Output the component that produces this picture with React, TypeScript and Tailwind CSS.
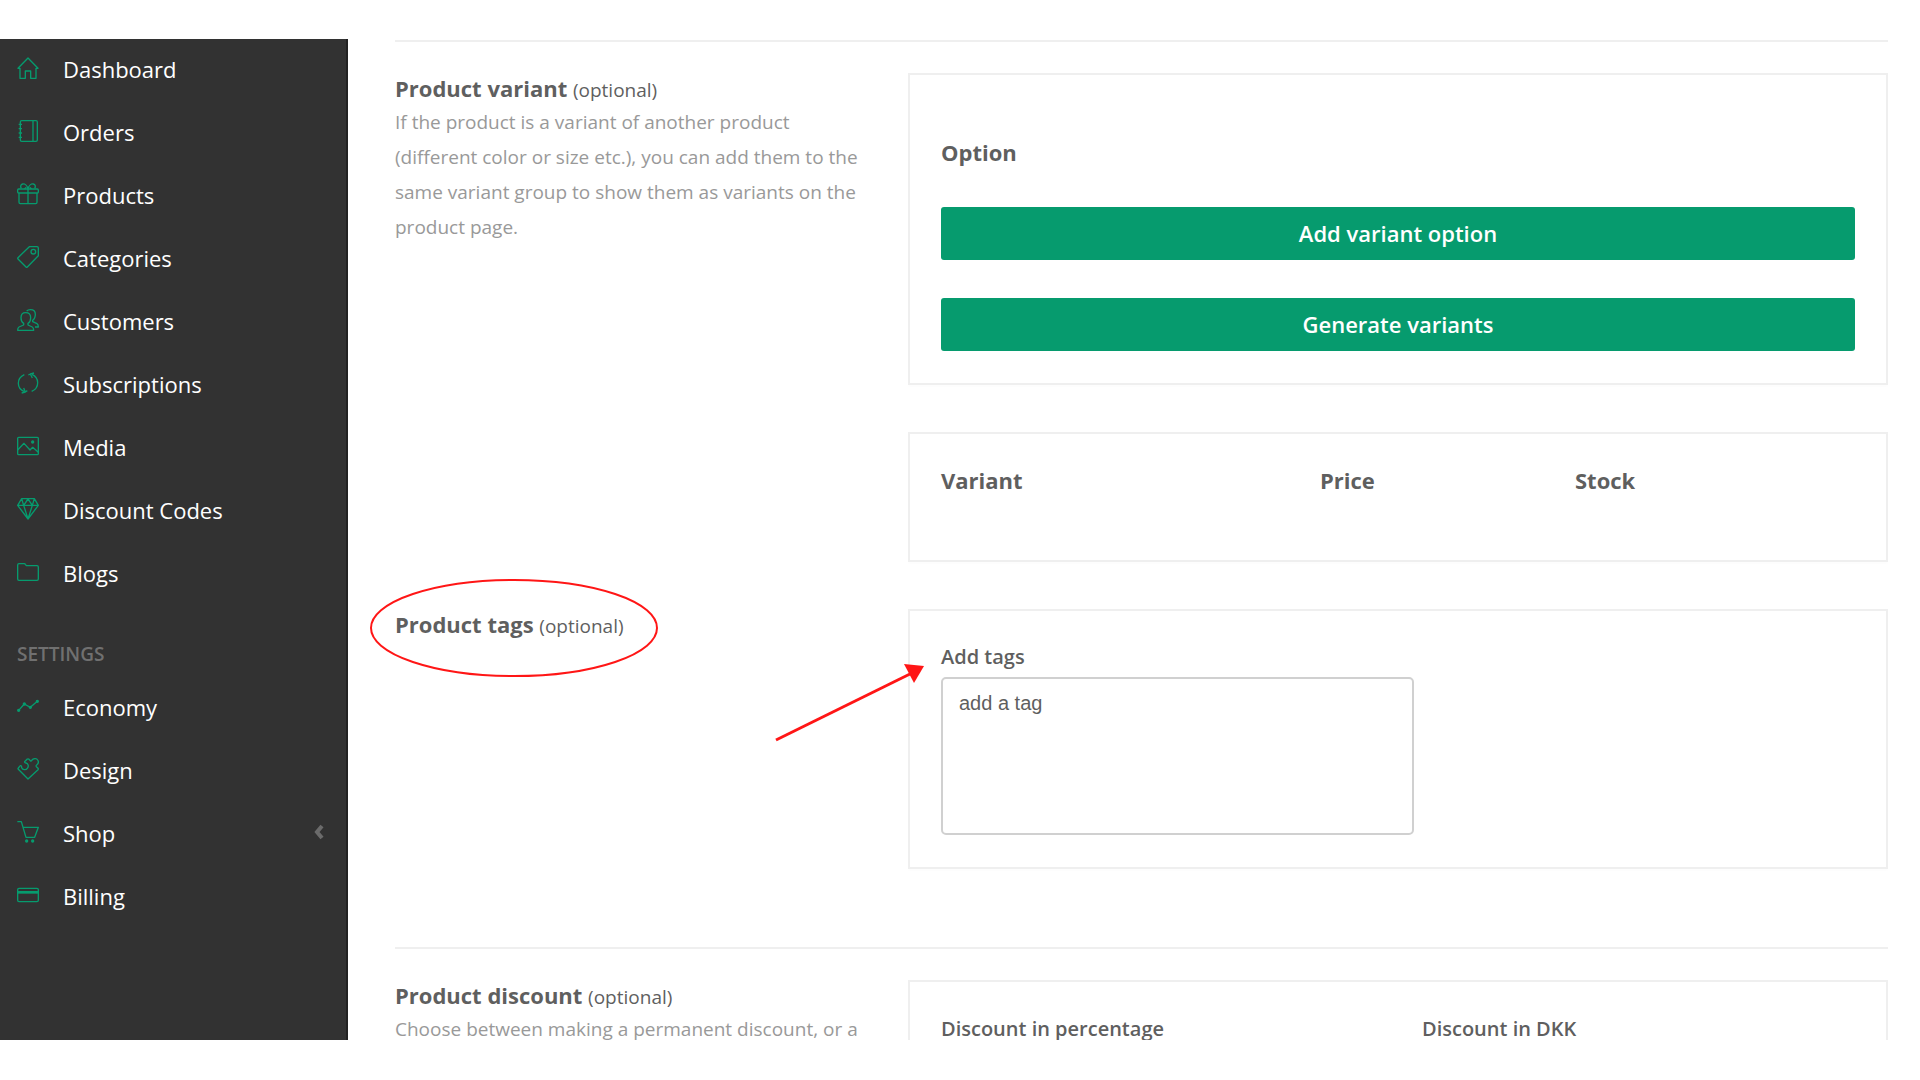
import type { ReactNode } from 'react';

type NavItem = {
    label: string;
    icon: ReactNode;
    expandable?: boolean;
};

const mainNav: NavItem[] = [
    {
        label: 'Dashboard',
        icon: <path d="M3 34 L33 3 L63 34 H57 V64 H41 V42 H25 V64 H9 V34 Z" />,
    },
    {
        label: 'Orders',
        icon: (
            <>
                <rect x="10" y="2" width="51" height="62" rx="4" />
                <path d="M48 2 V64 M5 13 H15 M5 26 H15 M5 39 H15 M5 52 H15" />
            </>
        ),
    },
    {
        label: 'Products',
        icon: (
            <>
                <rect x="2" y="18" width="62" height="12" rx="3" />
                <path d="M6 30 V58 Q6 62 10 62 H56 Q60 62 60 58 V30 M33 18 V62" />
                <path d="M33 18 C31 8 24 2 17 3 C11 4 9 11 13 16 M33 18 C35 8 42 2 49 3 C55 4 57 11 53 16 M23 18 C24 15 26 14 28 13 M43 18 C42 15 40 14 38 13" />
            </>
        ),
    },
    {
        label: 'Categories',
        icon: (
            <>
                <path d="M37 2 H60 Q64 2 64 6 V29 L31 63 Q29 65 27 63 L3 39 Q1 37 3 35 Z" />
                <circle cx="49" cy="17" r="7" />
            </>
        ),
    },
    {
        label: 'Customers',
        icon: (
            <>
                <path d="M26 11 C17 11 12 17 12 26 C12 34 15 40 20 43 V48 L6 54 Q2 56 2 64 H50 Q50 56 46 54 L33 48 V43 C38 40 41 34 41 26 C41 17 35 11 26 11 Z" />
                <path d="M29 6 C32 3 36 2 40 2 C49 2 55 7 55 16 C55 25 52 31 47 34 V38 L60 44 Q64 46 64 54 H54" />
            </>
        ),
    },
    {
        label: 'Subscriptions',
        icon: (
            <>
                <path d="M22 8 C9 14 4 24 4 34 C4 45 10 54 22 59 M44 58 C56 53 62 43 62 32 C62 22 56 12 45 7" />
                <path d="M20 48 L25 60 L14 63 M46 18 L40 6 L51 3 M25 60 L31 56 M40 6 L34 9" />
            </>
        ),
    },
    {
        label: 'Media',
        icon: (
            <>
                <rect x="2" y="7" width="62" height="52" rx="3" />
                <path d="M2 45 L21 25 L39 45 L47 37 L64 52" />
                <circle cx="47" cy="21" r="3" fill="currentColor" />
            </>
        ),
    },
    {
        label: 'Discount Codes',
        icon: (
            <path d="M14 2 H52 L64 22 L33 63 L2 22 Z M2 22 H64 M14 2 L20 22 L33 63 L46 22 L52 2 M20 22 L33 3 L46 22" />
        ),
    },
    {
        label: 'Blogs',
        icon: (
            <path d="M2 12 Q2 8 6 8 H22 Q24 8 25 10 L28 14 H60 Q64 14 64 18 V54 Q64 58 60 58 H6 Q2 58 2 54 Z" />
        ),
    },
];

const settingsNav: NavItem[] = [
    {
        label: 'Economy',
        icon: (
            <>
                <path d="M5 46 L22 27 L40 37 L61 19" />
                <g fill="currentColor">
                    <circle cx="5" cy="46" r="3" />
                    <circle cx="22" cy="27" r="3" />
                    <circle cx="40" cy="37" r="3" />
                    <circle cx="61" cy="19" r="3" />
                </g>
            </>
        ),
    },
    {
        label: 'Design',
        icon: (
            <path d="M33 63 L4 34 Q2 32 4 30 L10 23 C13 22 14 25 14 29 C17 36 27 37 31 31 C36 25 34 17 27 15 C22 14 22 12 24 10 L31 3 Q33 2 35 3 L41 9 C44 10 44 6 47 4 C52 1 59 1 62 6 C66 12 63 18 59 21 C56 23 57 25 59 27 L63 31 Q65 33 63 35 Z" />
        ),
    },
    {
        label: 'Shop',
        icon: (
            <>
                <path d="M1 2 H13 L27 49 H53 L64 19 H18" />
                <g fill="currentColor">
                    <circle cx="29" cy="60" r="3" />
                    <circle cx="47" cy="60" r="3" />
                </g>
            </>
        ),
        expandable: true,
    },
    {
        label: 'Billing',
        icon: (
            <>
                <rect x="2" y="13" width="62" height="40" rx="4" />
                <path d="M2 25 H64" strokeWidth="8" />
            </>
        ),
    },
];

function NavList({ items }: { items: NavItem[] }) {
    return (
        <ul className="flex flex-col gap-[27px]">
            {items.map((item) => (
                <li key={item.label}>
                    <a href="#" className="flex items-center pl-[17px] pr-[22px] text-[22px] text-white">
                        <svg
                            viewBox="0 0 66 66"
                            className="mr-6 h-[22px] w-[22px] shrink-0 text-[#069b6e]"
                            fill="none"
                            stroke="currentColor"
                            strokeWidth="4"
                            strokeLinejoin="round"
                            aria-hidden="true"
                        >
                            {item.icon}
                        </svg>
                        <span className="pt-0.5 leading-[34px]">{item.label}</span>
                        {item.expandable && (
                            <svg viewBox="0 0 10 16" className="ml-auto h-4 w-[10px] text-[#6b6b6b]" aria-hidden="true">
                                <path d="M8 2 L3 8 L8 14" fill="none" stroke="currentColor" strokeWidth="4" />
                            </svg>
                        )}
                    </a>
                </li>
            ))}
        </ul>
    );
}

function Card({ className = '', children }: { className?: string; children: ReactNode }) {
    return (
        <div className={`border-2 border-[#efefef] px-[31px] shadow-[0_2px_2px_rgba(0,0,0,0.01)] ${className}`}>
            {children}
        </div>
    );
}

type SectionProps = {
    title: string;
    description?: string;
    children: ReactNode;
};

function Section({ title, description, children }: SectionProps) {
    return (
        <section className="relative grid grid-cols-[513px_minmax(0,1fr)]">
            <div className="pr-12">
                <h2 className="text-[22px] font-bold leading-[30px]">
                    {title} <span className="text-[19px] font-normal">(optional)</span>
                </h2>
                {description && <p className="text-[19px] leading-[35px] text-[#999]">{description}</p>}
            </div>
            <div className="flex flex-col gap-[47px]">{children}</div>
        </section>
    );
}

function ActionButton({ children }: { children: ReactNode }) {
    return (
        <button
            type="button"
            className="h-[53px] w-full rounded-[3px] bg-[#069b6e] text-[22px] font-semibold text-white"
        >
            {children}
        </button>
    );
}

export default function App() {
    return (
        <div className="h-screen bg-white pb-10 pt-[39px] font-['Open_Sans',sans-serif] text-[#5f5f5f]">
            <div className="flex h-full overflow-hidden">
                <aside className="w-[348px] shrink-0 border-r-2 border-[#222] bg-[#323232] pt-[11px]">
                    <nav>
                        <NavList items={mainNav} />
                        <h3 className="mb-5 mt-[50px] pl-[17px] text-[19px] font-semibold leading-7 text-[#707070]">SETTINGS</h3>
                        <NavList items={settingsNav} />
                    </nav>
                </aside>

                <main className="min-w-0 flex-1 pl-[47px] pr-8 pt-px">
                    <hr className="mb-[31px] border-t-2 border-[#efefef]" />

                    <Section
                        title="Product variant"
                        description="If the product is a variant of another product (different color or size etc.), you can add them to the same variant group to show them as variants on the product page."
                    >
                        <Card className="pb-8 pt-[61px]">
                            <h3 className="mb-[39px] text-[22px] font-bold leading-8">Option</h3>
                            <div className="flex flex-col gap-[38px]">
                                <ActionButton>Add variant option</ActionButton>
                                <ActionButton>Generate variants</ActionButton>
                            </div>
                        </Card>
                        <Card className="pb-16 pt-[30px]">
                            <table className="w-full table-fixed text-left text-[22px] leading-8">
                                <thead>
                                    <tr>
                                        <th className="w-[379px] p-0 font-bold">Variant</th>
                                        <th className="w-[255px] p-0 font-bold">Price</th>
                                        <th className="p-0 font-bold">Stock</th>
                                    </tr>
                                </thead>
                            </table>
                        </Card>
                    </Section>

                    <div className="mt-[47px]">
                        <Section title="Product tags">
                            <Card className="pb-8 pt-[30px]">
                                <label htmlFor="tags" className="mb-1 block text-[20px] font-semibold leading-8">
                                    Add tags
                                </label>
                                <textarea
                                    id="tags"
                                    placeholder="add a tag"
                                    className="block h-[158px] w-[473px] max-w-full resize-none rounded-[5px] border-2 border-[#d0d0d0] px-4 py-3 font-['Liberation_Sans',sans-serif] text-[20px] leading-6 placeholder:text-[#5f5f5f]"
                                />
                            </Card>
                            {/* red markers over the tags section */}
                            <svg
                                className="pointer-events-none absolute -left-[26px] -top-[31px] h-[170px] w-[560px] text-[#ff1616]"
                                viewBox="0 0 560 170"
                                fill="none"
                                stroke="currentColor"
                                aria-hidden="true"
                            >
                                <ellipse cx="145" cy="50" rx="143" ry="48" strokeWidth="2" />
                                <path d="M407 162 L543 95" strokeWidth="3" />
                                <path d="M555 88 L535 86 L545 105 Z" fill="currentColor" stroke="none" />
                            </svg>
                        </Section>
                    </div>

                    <hr className="mb-[31px] mt-[78px] border-t-2 border-[#efefef]" />

                    <Section
                        title="Product discount"
                        description="Choose between making a permanent discount, or a"
                    >
                        <Card className="pb-16 pt-[31px]">
                            <div className="grid grid-cols-2 gap-12 text-[20px] font-semibold leading-8">
                                <p>Discount in percentage</p>
                                <p>Discount in DKK</p>
                            </div>
                        </Card>
                    </Section>
                </main>
            </div>
        </div>
    );
}
